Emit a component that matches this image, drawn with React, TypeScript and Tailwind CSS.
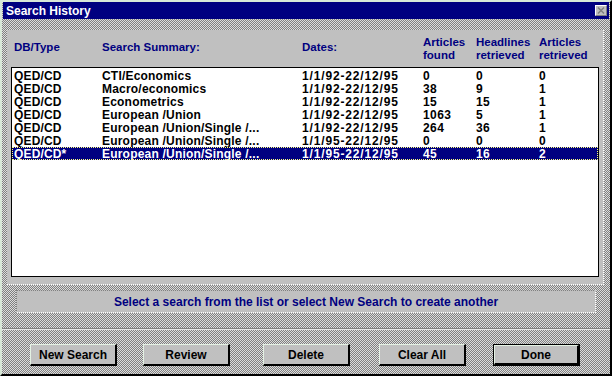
import React from "react";

const rows = [
  ["QED/CD", "CTI/Economics", "1/1/92-22/12/95", "0", "0", "0"],
  ["QED/CD", "Macro/economics", "1/1/92-22/12/95", "38", "9", "1"],
  ["QED/CD", "Econometrics", "1/1/92-22/12/95", "15", "15", "1"],
  ["QED/CD", "European /Union", "1/1/92-22/12/95", "1063", "5", "1"],
  ["QED/CD", "European /Union/Single /...", "1/1/92-22/12/95", "264", "36", "1"],
  ["QED/CD", "European /Union/Single /...", "1/1/95-22/12/95", "0", "0", "0"],
  ["QED/CD*", "European /Union/Single /...", "1/1/95-22/12/95", "45", "16", "2"],
];

const cols = "grid grid-cols-[88px_200px_121px_53px_63px_1fr]";
const track = [
  "tracking-[0.15px]",
  "tracking-[0.2px]",
  "tracking-[0.85px]",
  "tracking-[0.4px]",
  "tracking-[0.4px]",
  "tracking-[0.4px]",
];

function Btn({ label, ml, def }: { label: string; ml: string; def?: boolean }) {
  return (
    <div className={`${ml} w-[87px] h-[22px] ${def ? "border border-black" : ""}`}>
      <div className="w-full h-full bg-[#c0c0c0] border-t border-l border-t-[#e4f2e4] border-l-[#e4f2e4] border-r-2 border-b-2 border-r-black border-b-black flex items-center justify-center text-[12px] font-bold text-black">
        {label}
      </div>
    </div>
  );
}

export default function App() {
  return (
    <div
      className="w-[612px] h-[376px] flex flex-col border-2 border-l-[#d8e8d8] border-t-[#d8e8d8] border-r-black border-b-black bg-[image:repeating-conic-gradient(#808080_0%_25%,#dcdcdc_0%_50%)] bg-[length:2px_2px] overflow-hidden"
      style={{ fontFamily: '"Liberation Sans", Arial, sans-serif' }}
    >
      {/* Title bar */}
      <div className="mx-[1px] h-[17px] bg-[#000080] flex items-center justify-between pl-[3px] pr-[2px]">
        <span className="text-white font-bold text-[12px] leading-none">Search History</span>
        <div className="w-[12px] h-[11px] bg-[#c0c0c0] border-t border-l border-white border-r border-b border-r-[#808080] border-b-[#808080] flex items-center justify-center">
          <svg width="8" height="7" viewBox="0 0 8 7">
            <path d="M1 0.5 L7 6.5 M7 0.5 L1 6.5" stroke="#808080" strokeWidth="1.5" />
          </svg>
        </div>
      </div>

      {/* Main panel */}
      <div className="ml-[5px] mr-[6px] mt-[11px] h-[255px] bg-[#c0c0c0] border-r border-b border-dotted border-r-white border-b-white px-[4px] flex flex-col">
        <div className={`${cols} h-[37px] pt-[6px] pl-[3px] text-[#000080] font-bold text-[11.5px] leading-[13px]`}>
          <div className="pt-[5px]">DB/Type</div>
          <div className="pt-[5px]">Search Summary:</div>
          <div className="pt-[5px]">Dates:</div>
          <div>Articles<br />found</div>
          <div>Headlines<br />retrieved</div>
          <div>Articles<br />retrieved</div>
        </div>
        <div className="h-[210px] bg-white border border-black pt-[1px]">
          {rows.map((r, i) => {
            const sel = i === rows.length - 1;
            return (
              <div
                key={i}
                className={`${cols} h-[13px] pl-[2px] text-[12px] leading-[14px] font-bold ${
                  sel ? "bg-[#000080] text-white outline outline-1 outline-dotted outline-[#ffff80] -outline-offset-1" : "text-black"
                }`}
              >
                {r.map((c, j) => (
                  <div key={j} className={`whitespace-nowrap ${track[j]}`}>{c}</div>
                ))}
              </div>
            );
          })}
        </div>
      </div>

      {/* Status box */}
      <div className="ml-[14px] mt-[5px] w-[580px] h-[23px] bg-[#c0c0c0] border border-dotted border-l-[#808080] border-t-[#808080] border-r-white border-b-white flex items-center justify-center text-[12px] font-bold text-[#000080]">
        Select a search from the list or select New Search to create another
      </div>

      {/* Separator */}
      <div className="mt-[15px] h-[2px] border-t border-t-[#808080] border-b border-b-[#e8e8e8]" />

      {/* Buttons */}
      <div className="flex mt-[14px]">
        <Btn label="New Search" ml="ml-[28px]" />
        <Btn label="Review" ml="ml-[26px]" />
        <Btn label="Delete" ml="ml-[33px]" />
        <Btn label="Clear All" ml="ml-[29px]" />
        <Btn label="Done" ml="ml-[27px]" def />
      </div>
    </div>
  );
}
